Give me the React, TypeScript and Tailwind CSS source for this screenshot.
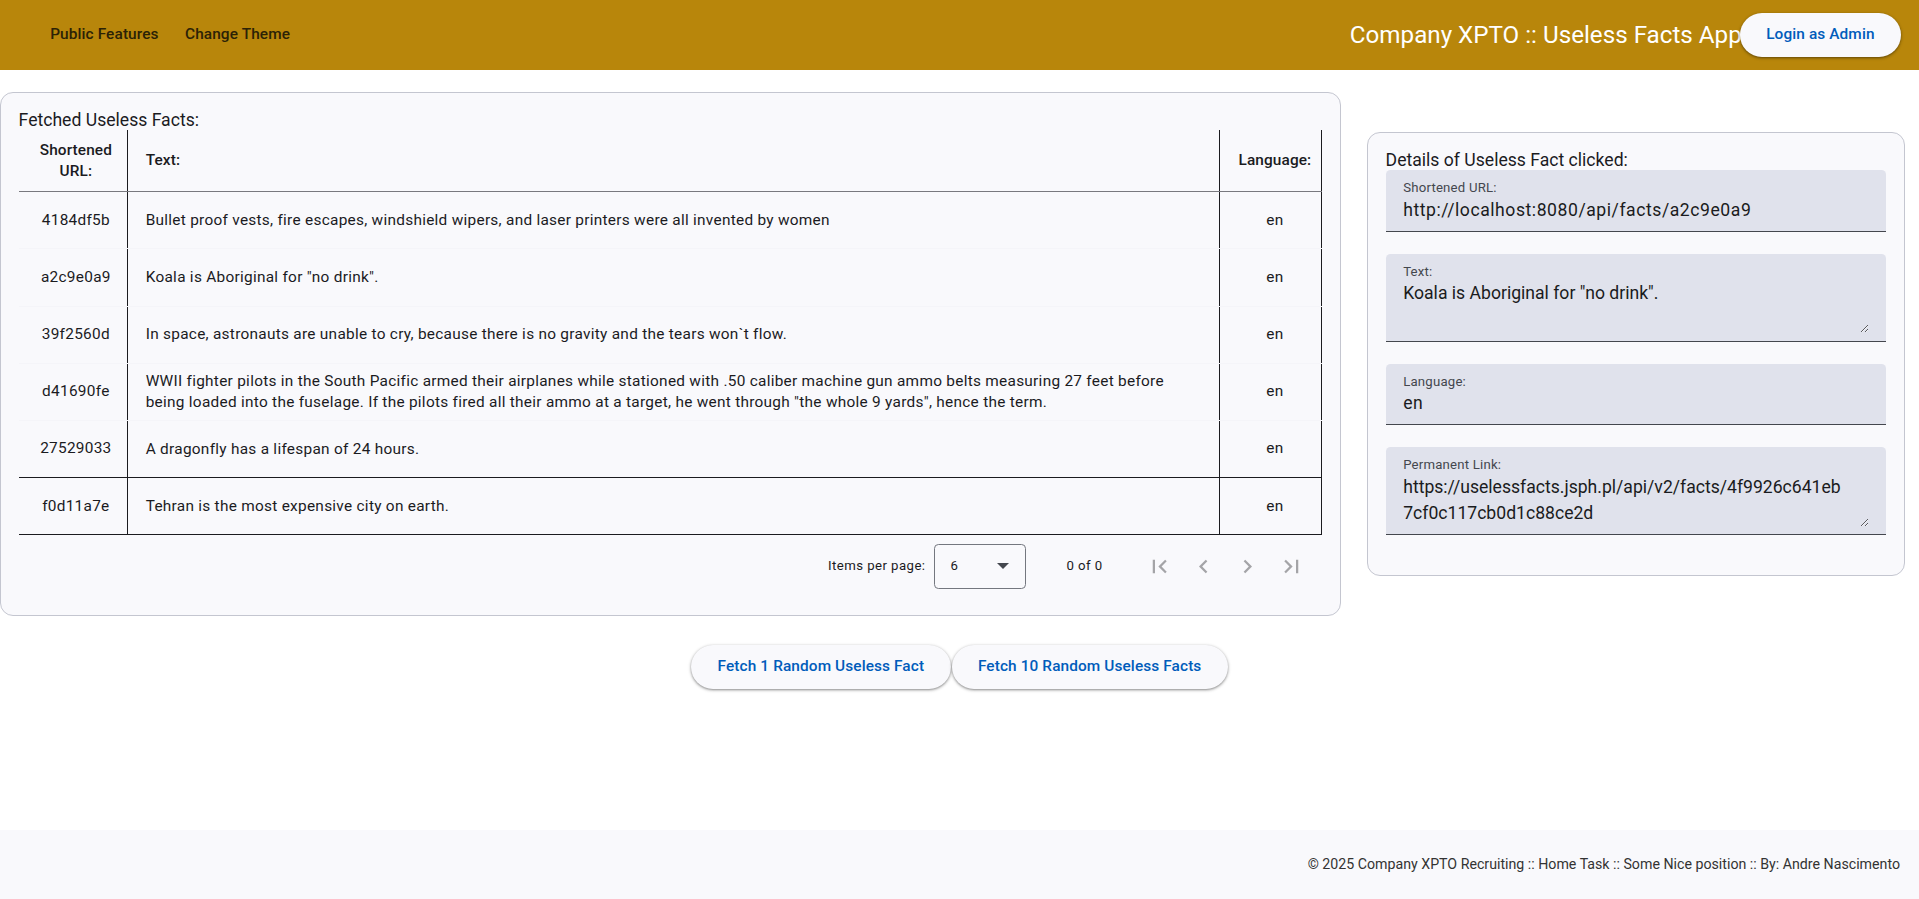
import React from "react";

const facts = [
  { id: "4184df5b", text: "Bullet proof vests, fire escapes, windshield wipers, and laser printers were all invented by women", lang: "en" },
  { id: "a2c9e0a9", text: 'Koala is Aboriginal for "no drink".', lang: "en" },
  { id: "39f2560d", text: "In space, astronauts are unable to cry, because there is no gravity and the tears won`t flow.", lang: "en" },
  {
    id: "d41690fe",
    text: 'WWII fighter pilots in the South Pacific armed their airplanes while stationed with .50 caliber machine gun ammo belts measuring 27 feet before being loaded into the fuselage. If the pilots fired all their ammo at a target, he went through "the whole 9 yards", hence the term.',
    lang: "en",
  },
  { id: "27529033", text: "A dragonfly has a lifespan of 24 hours.", lang: "en" },
  { id: "f0d11a7e", text: "Tehran is the most expensive city on earth.", lang: "en" },
];

function PagIcon({ d }: { d: string }) {
  return (
    <button className="w-[44px] h-[44px] flex items-center justify-center text-[#1b1b1f] opacity-[0.38]">
      <svg viewBox="0 0 24 24" width="27" height="27" fill="currentColor">
        <path d={d} />
      </svg>
    </button>
  );
}

function Field({ label, value, multiline }: { label: string; value: string; multiline?: boolean }) {
  return (
    <div className="mb-[22px]">
      <div className="bg-[#e0e2ec] rounded-t-[4.4px] border-b border-[#44474e] px-[17.6px] pt-[9px] pb-[7.8px]">
        <div className="text-[13.2px] leading-[17.4px] text-[#44474e] tracking-[0.2px]">{label}</div>
        {multiline ? (
          <textarea
            readOnly
            value={value}
            className="block w-full h-[52.8px] resize-y bg-transparent outline-none border-0 p-0 pr-[26px] m-0 text-[17.6px] leading-[26.4px] text-[#1a1b20] font-[Roboto,sans-serif] overflow-hidden"
          />
        ) : (
          <div className="text-[17.6px] leading-[26.4px] tracking-[0.55px] text-[#1a1b20] whitespace-nowrap">{value}</div>
        )}
      </div>
    </div>
  );
}

export default function App() {
  return (
    <div className="min-h-[899px] flex flex-col bg-white font-[Roboto,sans-serif] text-[#1b1b1f]">
      <header className="h-[70px] shrink-0 bg-[#b8860b] flex items-center pl-[37px] pr-[18px]">
        <button className="px-[13.2px] h-[44px] text-[15.4px] font-medium tracking-[0.11px] text-[#2b2206]">Public Features</button>
        <button className="px-[13.2px] h-[44px] text-[15.4px] font-medium tracking-[0.11px] text-[#2b2206]">Change Theme</button>
        <div className="flex-1" />
        <span className="text-[24.2px] text-white whitespace-nowrap">Company XPTO :: Useless Facts App</span>
        <button className="relative z-10 -ml-[2px] h-[44px] px-[26.4px] rounded-full bg-[#f9f9fc] text-[#005cbb] text-[15.4px] font-medium tracking-[0.11px] shadow-[0_1px_2px_rgba(0,0,0,0.3),0_1px_3px_1px_rgba(0,0,0,0.15)]">
          Login as Admin
        </button>
      </header>

      <main className="flex items-start pt-[22px]">
        <section className="w-[1341px] shrink-0 bg-[#f9f9fc] border border-[#c4c6d0] rounded-[13px] p-[17.6px] pt-[16.5px]">
          <div className="text-[17.6px] leading-[20.6px]">Fetched Useless Facts:</div>
          <table className="w-full border-collapse text-[15.4px]">
            <colgroup>
              <col className="w-[109px]" />
              <col />
              <col className="w-[102px]" />
            </colgroup>
            <thead>
              <tr>
                <th className="h-[61.6px] border-b border-b-[#79797f] border-r border-r-[#1b1b1f] pl-[20px] pr-[14px] text-center font-medium leading-[21px] tracking-[0.11px]">
                  Shortened URL:
                </th>
                <th className="h-[61.6px] border-b border-b-[#79797f] pl-[17.6px] pr-[17.6px] text-left font-medium tracking-[0.11px]">Text:</th>
                <th className="h-[61.6px] border-b border-b-[#79797f] border-l border-l-[#1b1b1f] border-r border-r-[#1b1b1f] pl-[18px] pr-[10px] text-center font-medium tracking-[0.11px]">
                  Language:
                </th>
              </tr>
            </thead>
            <tbody>
              {facts.map((f, i) => {
                const dark = i >= 4;
                const rowB = dark ? "border-b-[#1b1b1f]" : "border-b-[#f5f5f9]";
                return (
                  <tr key={f.id}>
                    <td className={`h-[57.2px] border-b ${rowB} border-r border-r-[#1b1b1f] pl-[20px] pr-[14px] text-center tracking-[0.275px]`}>{f.id}</td>
                    <td className={`h-[57.2px] border-b ${rowB} pl-[17.6px] pr-[17.6px] leading-[21px] py-[6px] tracking-[0.275px]`}>{f.text}</td>
                    <td className={`h-[57.2px] border-b ${rowB} border-l border-l-[#1b1b1f] border-r border-r-[#1b1b1f] pl-[18px] pr-[10px] text-center tracking-[0.275px]`}>
                      {f.lang}
                    </td>
                  </tr>
                );
              })}
            </tbody>
          </table>
          <div className="h-[61.6px] flex items-center justify-end pr-[8.8px] text-[13.2px] tracking-[0.44px] text-[#1b1b1f]">
            <span className="mr-[9px]">Items per page:</span>
            <div className="w-[92px] h-[45px] border border-[#74777f] rounded-[4.4px] flex items-center pl-[15px] pr-[16px]">
              <span className="flex-1">6</span>
              <svg width="12" height="6" viewBox="0 0 10 5" className="text-[#44474e]" fill="currentColor">
                <path d="M0 0 L5 5 L10 0 Z" />
              </svg>
            </div>
            <span className="ml-[40px] mr-[35px]">0 of 0</span>
            <PagIcon d="M18.41 16.59L13.82 12l4.59-4.59L17 6l-6 6 6 6zM6 6h2v12H6z" />
            <PagIcon d="M15.41 7.41L14 6l-6 6 6 6 1.41-1.41L10.83 12z" />
            <PagIcon d="M10 6L8.59 7.41 13.17 12l-4.58 4.59L10 18l6-6z" />
            <PagIcon d="M5.59 7.41L10.18 12l-4.59 4.59L7 18l6-6-6-6zM16 6h2v12h-2z" />
          </div>
        </section>

        <aside className="ml-[26px] mt-[40px] w-[538px] shrink-0 bg-[#f9f9fc] border border-[#c4c6d0] rounded-[13px] px-[17.6px] pt-[16.5px] pb-[17.6px]">
          <div className="text-[17.6px] leading-[20.6px]">Details of Useless Fact clicked:</div>
          <Field label="Shortened URL:" value="http://localhost:8080/api/facts/a2c9e0a9" />
          <Field label="Text:" value={'Koala is Aboriginal for "no drink".'} multiline />
          <Field label="Language:" value="en" />
          <Field label="Permanent Link:" value="https://uselessfacts.jsph.pl/api/v2/facts/4f9926c641eb7cf0c117cb0d1c88ce2d" multiline />
        </aside>
      </main>

      <div className="flex justify-center gap-[1px] mt-[29px]">
        <button className="h-[44px] px-[26.4px] rounded-full bg-[#f9f9fc] text-[#005cbb] text-[15.4px] font-medium tracking-[0.11px] shadow-[0_1px_2px_rgba(0,0,0,0.3),0_1px_3px_1px_rgba(0,0,0,0.15)]">
          Fetch 1 Random Useless Fact
        </button>
        <button className="h-[44px] px-[26.4px] rounded-full bg-[#f9f9fc] text-[#005cbb] text-[15.4px] font-medium tracking-[0.11px] shadow-[0_1px_2px_rgba(0,0,0,0.3),0_1px_3px_1px_rgba(0,0,0,0.15)]">
          Fetch 10 Random Useless Facts
        </button>
      </div>

      <footer className="mt-auto h-[69px] shrink-0 bg-[#f9f9fc] flex items-center justify-end pr-[19px]">
        <span className="text-[14.2px] text-[#333333]">© 2025 Company XPTO Recruiting :: Home Task :: Some Nice position :: By: Andre Nascimento</span>
      </footer>
    </div>
  );
}
